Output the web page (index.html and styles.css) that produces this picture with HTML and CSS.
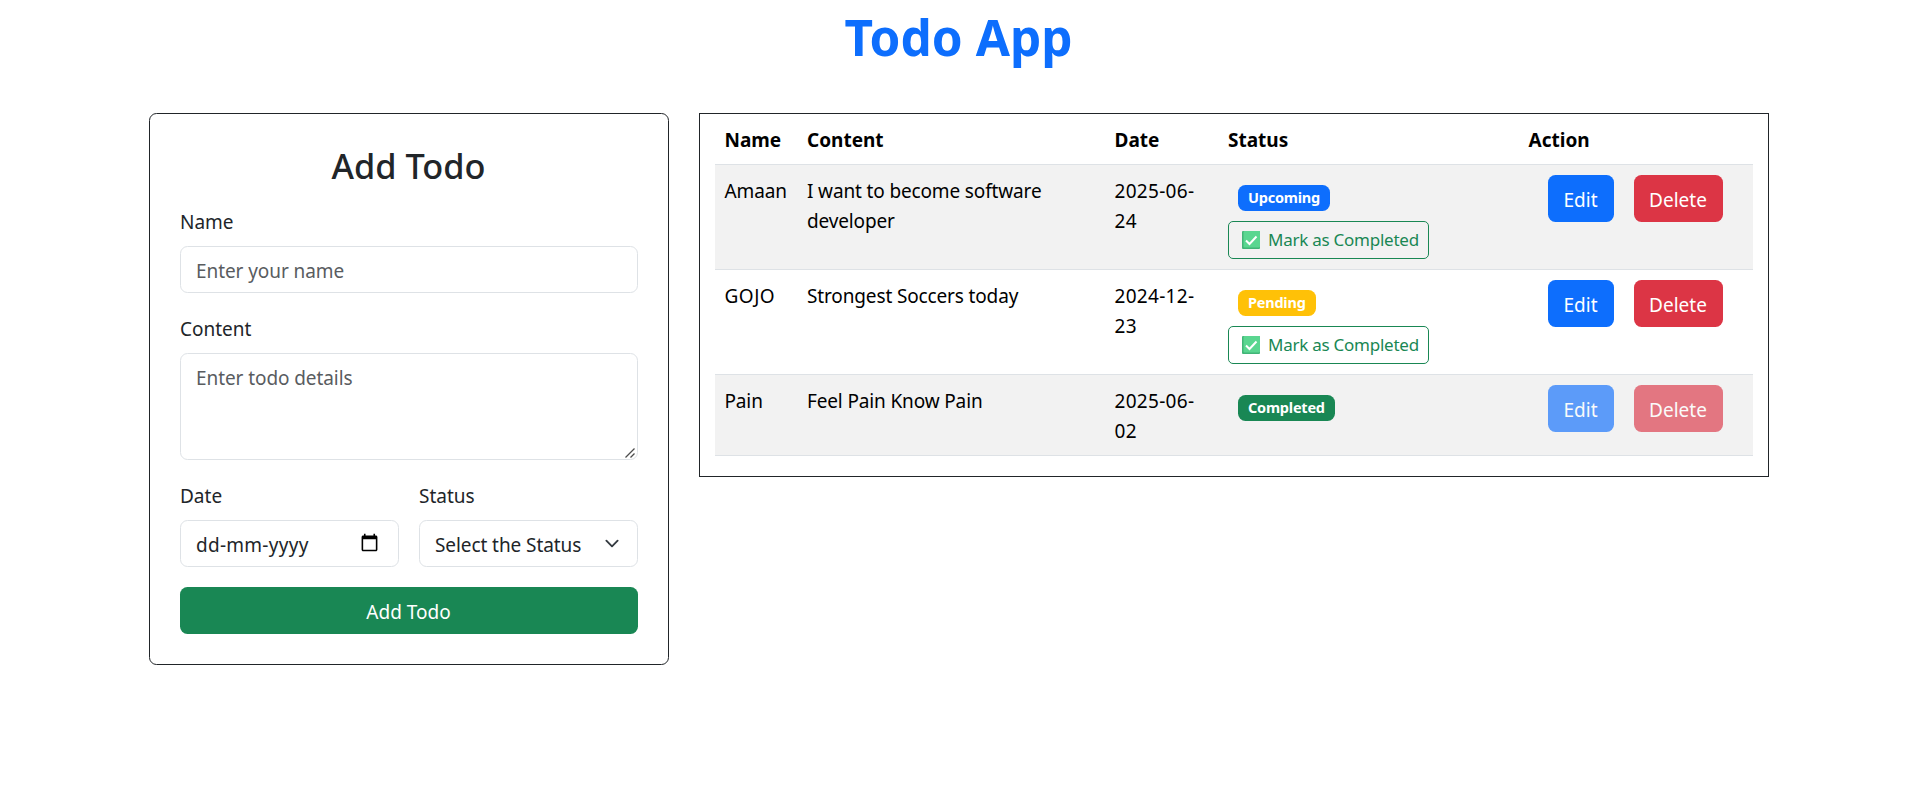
FILE: index.html
```html
<!DOCTYPE html>
<html lang="en">
<head>
<meta charset="utf-8">
<title>Todo App</title>
<link rel="stylesheet" href="styles.css">
</head>
<body>
<h1 class="app-title">Todo App</h1>
<main class="container">
  <form class="card">
    <h2 class="card-title">Add Todo</h2>
    <div class="field">
      <label class="label" for="name">Name</label>
      <input class="control" id="name" type="text" placeholder="Enter your name">
    </div>
    <div class="field area-field">
      <label class="label" for="content">Content</label>
      <textarea class="control area" id="content" rows="3" placeholder="Enter todo details"></textarea>
      <svg class="grip" viewBox="0 0 10 10"><path d="M.500 9.500l9-9M5.500 9.500l4-4" fill="none" stroke="#4d4d4d" stroke-width="1.300"/></svg>
    </div>
    <div class="pair">
      <div class="field">
        <div class="label">Date</div>
        <div class="control split">
          <span class="date-text">dd-mm-yyyy</span>
          <svg class="calendar" viewBox="0 0 24 24"><path fill="#000" d="M20 3h-1V1h-2v2H7V1H5v2H4c-1.100 0-2 .9-2 2v16c0 1.100.9 2 2 2h16c1.100 0 2-.9 2-2V5c0-1.100-.9-2-2-2zm0 18H4V8h16v13z"/></svg>
        </div>
      </div>
      <div class="field">
        <div class="label">Status</div>
        <div class="control split">
          <span>Select the Status</span>
          <svg class="chevron" viewBox="0 0 16 16"><path fill="none" stroke="#343a40" stroke-linecap="round" stroke-linejoin="round" stroke-width="2" d="m2 5 6 6 6-6"/></svg>
        </div>
      </div>
    </div>
    <button class="btn btn-success" type="button">Add Todo</button>
  </form>
  <section class="list">
    <table class="table">
      <colgroup><col class="c-name"><col class="c-content"><col class="c-date"><col class="c-status"><col class="c-action"></colgroup>
      <thead>
        <tr><th>Name</th><th>Content</th><th>Date</th><th>Status</th><th>Action</th></tr>
      </thead>
      <tbody>
        <tr class="tall striped">
          <td>Amaan</td><td>I want to become software<br>developer</td><td class="date">2025-06-<br>24</td>
          <td><span class="badge upcoming">Upcoming</span>
            <button class="mark" type="button"><svg class="check" viewBox="0 0 18 18"><rect width="18" height="18" rx="1" fill="#41b577"/><rect x="1.500" width="16.500" height="16.500" rx="1" fill="#5ad690"/><path d="M4 9.500l3.500 3.500 7-7.500" fill="none" stroke="#fff" stroke-width="2"/></svg><span>Mark as Completed</span></button></td>
          <td><div class="actions"><button class="btn btn-primary" type="button">Edit</button><button class="btn btn-danger" type="button">Delete</button></div></td>
        </tr>
        <tr class="tall">
          <td class="caps">GOJO</td><td>Strongest Soccers today</td><td class="date">2024-12-<br>23</td>
          <td><span class="badge pending">Pending</span>
            <button class="mark" type="button"><svg class="check" viewBox="0 0 18 18"><rect width="18" height="18" rx="1" fill="#41b577"/><rect x="1.500" width="16.500" height="16.500" rx="1" fill="#5ad690"/><path d="M4 9.500l3.500 3.500 7-7.500" fill="none" stroke="#fff" stroke-width="2"/></svg><span>Mark as Completed</span></button></td>
          <td><div class="actions"><button class="btn btn-primary" type="button">Edit</button><button class="btn btn-danger" type="button">Delete</button></div></td>
        </tr>
        <tr class="short striped">
          <td>Pain</td><td>Feel Pain Know Pain</td><td class="date">2025-06-<br>02</td>
          <td><span class="badge completed">Completed</span></td>
          <td><div class="actions"><button class="btn btn-primary" type="button" disabled>Edit</button><button class="btn btn-danger" type="button" disabled>Delete</button></div></td>
        </tr>
      </tbody>
    </table>
  </section>
</main>
</body>
</html>
```
FILE: styles.css
```css
* { box-sizing: border-box; }
body {
  margin: 0;
  background: #fff;
  color: #212529;
  font-family: "Noto Sans", "Open Sans", sans-serif;
  font-size: 19px;
  line-height: 30px;
}
.app-title {
  margin: 0;
  padding-top: 7px;
  height: 113px;
  color: #0d6efd;
  font-size: 49.500px;
  font-weight: 700;
  line-height: 60px;
  text-align: center;
}
.container {
  display: grid;
  grid-template-columns: 520px 1070px;
  column-gap: 30px;
  align-items: start;
  width: 1620px;
  margin: 0 auto;
}
.card {
  padding: 30px;
  border: 1px solid #212529;
  border-radius: 7.500px;
}
.card-title {
  margin: 0 0 20px;
  padding-top: 1px;
  font-size: 34.300px;
  font-weight: 500;
  line-height: 41px;
  text-align: center;
}
.field { margin-bottom: 20px; }
.label {
  display: block;
  padding: 1px 0 0 .5px;
  margin-bottom: 9px;
}
.control {
  display: block;
  width: 100%;
  height: 47px;
  padding: 8.500px 15px 6.500px 15.500px;
  border: 1px solid #dee2e6;
  border-radius: 7.500px;
  background: #fff;
  color: #212529;
  font: inherit;
  letter-spacing: -.08px;
}
.control::placeholder { color: #595c5f; opacity: 1; }
.area { height: 107px; resize: none; }
.area-field { position: relative; }
.grip {
  position: absolute;
  right: 2.500px;
  bottom: 2px;
  width: 10px;
  height: 10px;
}
.pair {
  display: grid;
  grid-template-columns: 1fr 1fr;
  gap: 20px;
}
.split {
  display: flex;
  align-items: center;
  justify-content: space-between;
}
.date-text { letter-spacing: .27px; }
.calendar { width: 19px; height: 19px; margin: 0 3.500px 4px 0; }
.chevron { width: 20px; height: 15px; margin-bottom: 3px; }
.btn {
  height: 47px;
  padding: 2px 0 0;
  border: 0;
  border-radius: 7.500px;
  color: #fff;
  font: inherit;
}
.btn:disabled { opacity: .65; }
.btn-success { display: block; width: 100%; background: #198754; }
.btn-primary { background: #0d6efd; width: 66px; }
.btn-danger { background: #dc3545; width: 89px; }
.list {
  padding: 0 15px 20px;
  border: 1px solid #212529;
}
.table {
  width: 1038px;
  table-layout: fixed;
  border-collapse: separate;
  border-spacing: 0;
  color: #000;
}
.c-name { width: 82.500px; }
.c-content { width: 307.500px; }
.c-date { width: 113.500px; }
.c-status { width: 300.500px; }
.c-action { width: 234px; }
.table th, .table td {
  padding: 11px 10px 9px;
  border-bottom: 1px solid #dee2e6;
  text-align: left;
  vertical-align: top;
}
.table td { letter-spacing: -.14px; }
.table td.date { letter-spacing: .3px; }
.table td.caps { letter-spacing: .5px; }
.tall { height: 105px; }
.short { height: 81px; }
.striped td { background: #f2f2f2; }
.badge {
  display: block;
  width: fit-content;
  height: 26px;
  margin: 9px 10px 10px;
  padding: 0 10px;
  border-radius: 7.500px;
  color: #fff;
  font-size: 14.500px;
  font-weight: 700;
  line-height: 25px;
  letter-spacing: -.22px;
}
.upcoming { background: #0d6efd; }
.pending { background: #ffc107; }
.completed { background: #198754; }
.mark {
  display: flex;
  align-items: center;
  width: 201px;
  height: 38px;
  padding: 0 0 0 13px;
  gap: 8px;
  border: 1px solid #198754;
  border-radius: 5px;
  background: transparent;
  color: #198754;
  font: inherit;
  font-size: 17px;
  letter-spacing: -.25px;
  white-space: nowrap;
}
.check { width: 18px; height: 18px; }
.actions { display: flex; gap: 20px; margin: -1px 0 0 19px; }
```
